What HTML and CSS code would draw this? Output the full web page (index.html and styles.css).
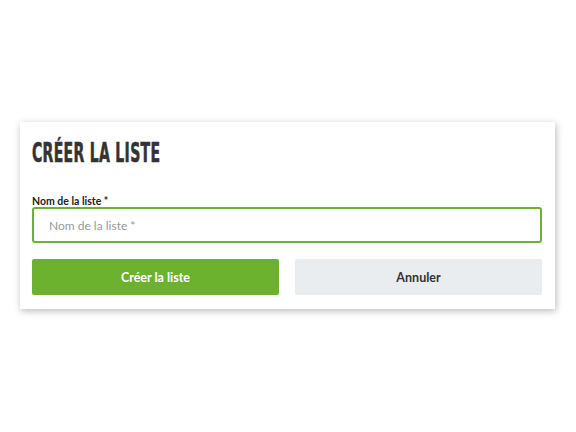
FILE: index.html
```html
<!DOCTYPE html>
<html lang="fr">
<head>
    <meta charset="UTF-8">
    <meta name="viewport" content="width=device-width, initial-scale=1.0">
    <title>Créer la liste</title>
    <link rel="stylesheet" href="styles.css">
</head>
<body>
    <div class="card">
        <h1 class="card-title"><span>Créer la liste</span></h1>

        <form class="list-form">
            <label for="listName">Nom de la liste *</label>
            <input type="text" id="listName" placeholder="Nom de la liste *">
            <div class="actions">
                <button type="submit" class="btn btn-primary">Créer la liste</button>
                <button type="button" class="btn btn-secondary">Annuler</button>
            </div>
        </form>
    </div>
</body>
</html>
```

FILE: styles.css
```css
body {
    margin: 0;
    padding: 122px 21px 40px 20px;
    background-color: #fff;
    font-family: Lato, "Open Sans", sans-serif;
}
.card {
    background-color: #fff;
    padding: 14px 13px 14px 12px;
    box-shadow: 1px 2px 7px rgba(0,0,0,0.28);
}
.card-title {
    margin: 0;
    height: 34px;
    font-family: "DejaVu Sans Condensed", sans-serif;
    font-weight: bold;
    font-size: 26px;
    line-height: 34px;
    color: #333;
    text-transform: uppercase;
    white-space: nowrap;
}
.card-title span {
    display: inline-block;
    transform: scaleX(0.6);
    transform-origin: left center;
    letter-spacing: 0.5px;
    -webkit-text-stroke: 0.6px #333;
}
.list-form {
    margin-top: 25px;
}
label {
    display: block;
    font-size: 10.5px;
    font-weight: bold;
    color: #222;
    line-height: 12px;
}
input[type="text"] {
    display: block;
    width: 100%;
    height: 36px;
    padding: 0 15px;
    border: 2px solid #6db131;
    border-radius: 3px;
    box-sizing: border-box;
    font-family: Lato, sans-serif;
    font-size: 12px;
    color: #333;
    outline: none;
}
input::placeholder {
    color: #999;
}
.actions {
    display: grid;
    grid-template-columns: 1fr 1fr;
    gap: 16px;
    margin-top: 16px;
}
.btn {
    height: 36px;
    border: none;
    border-radius: 2px;
    font-family: Lato, sans-serif;
    font-size: 12.5px;
    font-weight: bold;
    cursor: pointer;
}
.btn-primary {
    background-color: #6db22f;
    color: #fff;
}
.btn-secondary {
    background-color: #e9edf0;
    color: #333;
}
```
